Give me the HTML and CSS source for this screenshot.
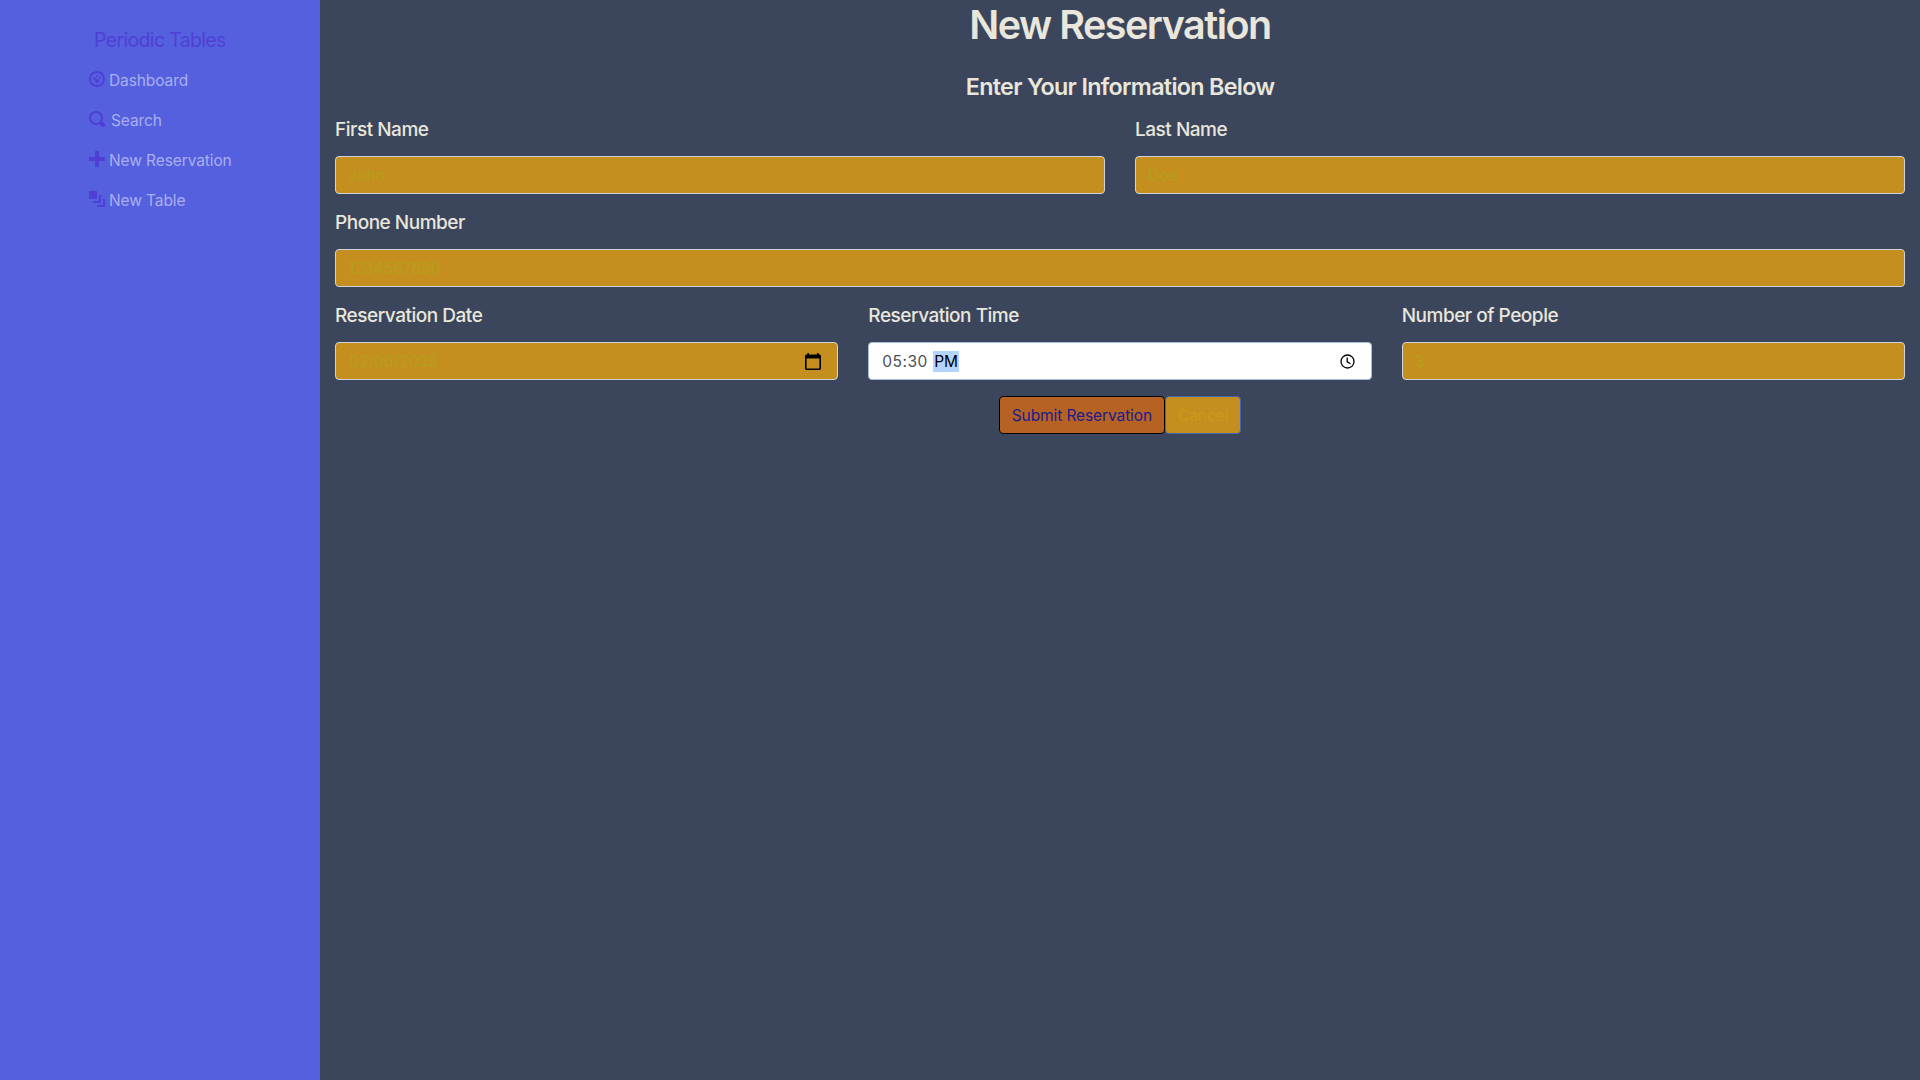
FILE: index.html
```html
<!DOCTYPE html>
<html lang="en">
<head>
<meta charset="utf-8">
<title>New Reservation</title>
<link rel="stylesheet" href="styles.css">
</head>
<body>
<nav class="side">
  <div class="menu">
    <div class="brand">Periodic Tables</div>
    <a class="item"><svg class="icon" viewBox="0 0 8 8"><path d="M4 0c-2.2 0-4 1.8-4 4s1.8 4 4 4 4-1.8 4-4-1.8-4-4-4zm0 1c1.66 0 3 1.34 3 3s-1.34 3-3 3-3-1.34-3-3 1.34-3 3-3zm0 1c-.28 0-.5.22-.5.5s.22.5.5.5.5-.22.5-.5-.22-.5-.5-.5zm-1.66 1a.5.5 0 0 0-.19.84l.91.91c-.02.08-.06.16-.06.25 0 .55.45 1 1 1s1-.45 1-1-.45-1-1-1c-.09 0-.17.04-.25.06l-.91-.91a.5.5 0 0 0-.44-.16.5.5 0 0 0-.06 0zm3.16 0c-.28 0-.5.22-.5.5s.22.5.5.5.5-.22.5-.5-.22-.5-.5-.5z"/></svg><span>Dashboard</span></a>
    <a class="item item-search"><svg class="icon" viewBox="0 0 8 8"><path d="M3.5 0c-1.93 0-3.5 1.57-3.5 3.5s1.57 3.5 3.5 3.5c.59 0 1.17-.14 1.66-.41a1 1 0 0 0 .13.13l1 1a1.02 1.02 0 1 0 1.44-1.44l-1-1a1 1 0 0 0-.16-.13c.27-.49.44-1.06.44-1.66 0-1.93-1.55-3.5-3.5-3.5zm0 1c1.39 0 2.5 1.11 2.5 2.5 0 .66-.24 1.27-.66 1.72-.01.01-.02.02-.03.03a1 1 0 0 0-.13.13c-.44.4-1.04.63-1.69.63-1.39 0-2.5-1.11-2.5-2.5s1.11-2.5 2.5-2.5z"/></svg><span>Search</span></a>
    <a class="item"><svg class="icon" viewBox="0 0 8 8"><path d="M3 0v3h-3v2h3v3h2v-3h3v-2h-3v-3h-2z"/></svg><span>New Reservation</span></a>
    <a class="item"><svg class="icon" viewBox="0 0 8 8"><path d="M0 0v4h4v-4h-4zm5 2v3h-3v1h4v-4h-1zm2 2v3h-3v1h4v-4h-1z"/></svg><span>New Table</span></a>
  </div>
</nav>
<main class="main">
  <h1 class="title">New Reservation</h1>
  <h4 class="subtitle">Enter Your Information Below</h4>
  <form>
    <div class="row">
      <div class="group"><span class="label">First Name</span><div class="field">John</div></div>
      <div class="group"><span class="label">Last Name</span><div class="field">Doe</div></div>
    </div>
    <div class="row">
      <div class="group"><span class="label">Phone Number</span><div class="field">1234567890</div></div>
    </div>
    <div class="row">
      <div class="group"><span class="label">Reservation Date</span><div class="field picker"><span class="date">02/06/2035</span><svg class="calendar" viewBox="2 1 20 22" preserveAspectRatio="none"><path d="M20 3h-1V1h-2v2H7V1H5v2H4c-1.100 0-2 .9-2 2v16c0 1.100.9 2 2 2h16c1.100 0 2-.9 2-2V5c0-1.100-.9-2-2-2zm0 18H4V8h16v13z"/></svg></div></div>
      <div class="group"><span class="label">Reservation Time</span><div class="field picker active"><span class="time">05:30</span><span class="period">PM</span><svg class="clock" viewBox="0 0 15 15"><circle cx="7.500" cy="7.500" r="6.500"/><path d="M7.200 3.500v4.300l3.300 2"/></svg></div></div>
      <div class="group"><span class="label">Number of People</span><div class="field">3</div></div>
    </div>
    <div class="actions"><button type="button" class="btn submit">Submit Reservation</button><button type="button" class="btn cancel">Cancel</button></div>
  </form>
</main>
</body>
</html>
```

FILE: styles.css
```css
* { box-sizing: border-box; }
body { margin: 0; display: flex; min-height: 1080px; font: 400 15.5px/24px Inter, sans-serif; letter-spacing: -.1px; background: #3b455c; }
.side { flex: none; width: 320px; background: #5560df; }
.menu { display: flex; flex-direction: column; padding: 20px 0 0 89px; }
.brand { height: 40px; padding-left: 5px; font-size: 19.4px; line-height: 40px; letter-spacing: -.6px; color: #4f3fd5; }
.item { display: flex; align-items: center; gap: 4px; height: 40px; color: #a9afef; }
.item span { padding-top: 2px; }
.item-search { gap: 6px; }
.icon { width: 16px; height: 16px; margin-top: -2px; fill: #4f3fd5; }
.main { flex: 1; padding: 0 15px; color: #e9e6db; }
.title, .subtitle { margin: 0; font-weight: 560; text-align: center; }
.title { font-size: 39.5px; line-height: 48px; letter-spacing: -1.5px; padding-top: 1px; }
.subtitle { margin-top: 23px; font-size: 23.3px; line-height: 29px; letter-spacing: -.68px; }
.row { display: flex; gap: 30px; height: 93px; }
.row:first-child { margin-top: 13px; }
.group { flex: 1; }
.label { display: block; height: 42px; padding-top: 2px; font-size: 19px; font-weight: 540; line-height: 28px; letter-spacing: -.48px; }
.field { display: flex; align-items: center; height: 38px; padding: 1px 12px 0; border: 1px solid #ced4da; border-radius: 4px; background: #c58f20; color: #b5a01a; letter-spacing: .1px; }
.picker { padding-left: 13px; }
.active { background: #fff; border-color: #a8bfdc; color: #495057; }
.time { letter-spacing: .5px; width: 51px; }
.period { padding: 0 1px; line-height: 21px; letter-spacing: -.15px; background: #b3d4fd; color: #000; }
.calendar { width: 16px; height: 17px; margin-left: auto; margin-right: 4px; fill: #000; }
.clock { width: 15px; height: 15px; margin-left: auto; margin-right: 4px; margin-top: -1px; fill: none; stroke: #000; stroke-width: 1.3; }
.actions { display: flex; justify-content: center; margin-top: 3px; }
.btn { height: 38px; padding: 1px 12px 0; border: 1px solid; border-radius: 4px; font: inherit; letter-spacing: inherit; }
.submit { background: #b66222; border-color: #000; color: #1b1b93; }
.cancel { background: #c58f20; border-color: #4465b0; color: #ca9a18; }
```
